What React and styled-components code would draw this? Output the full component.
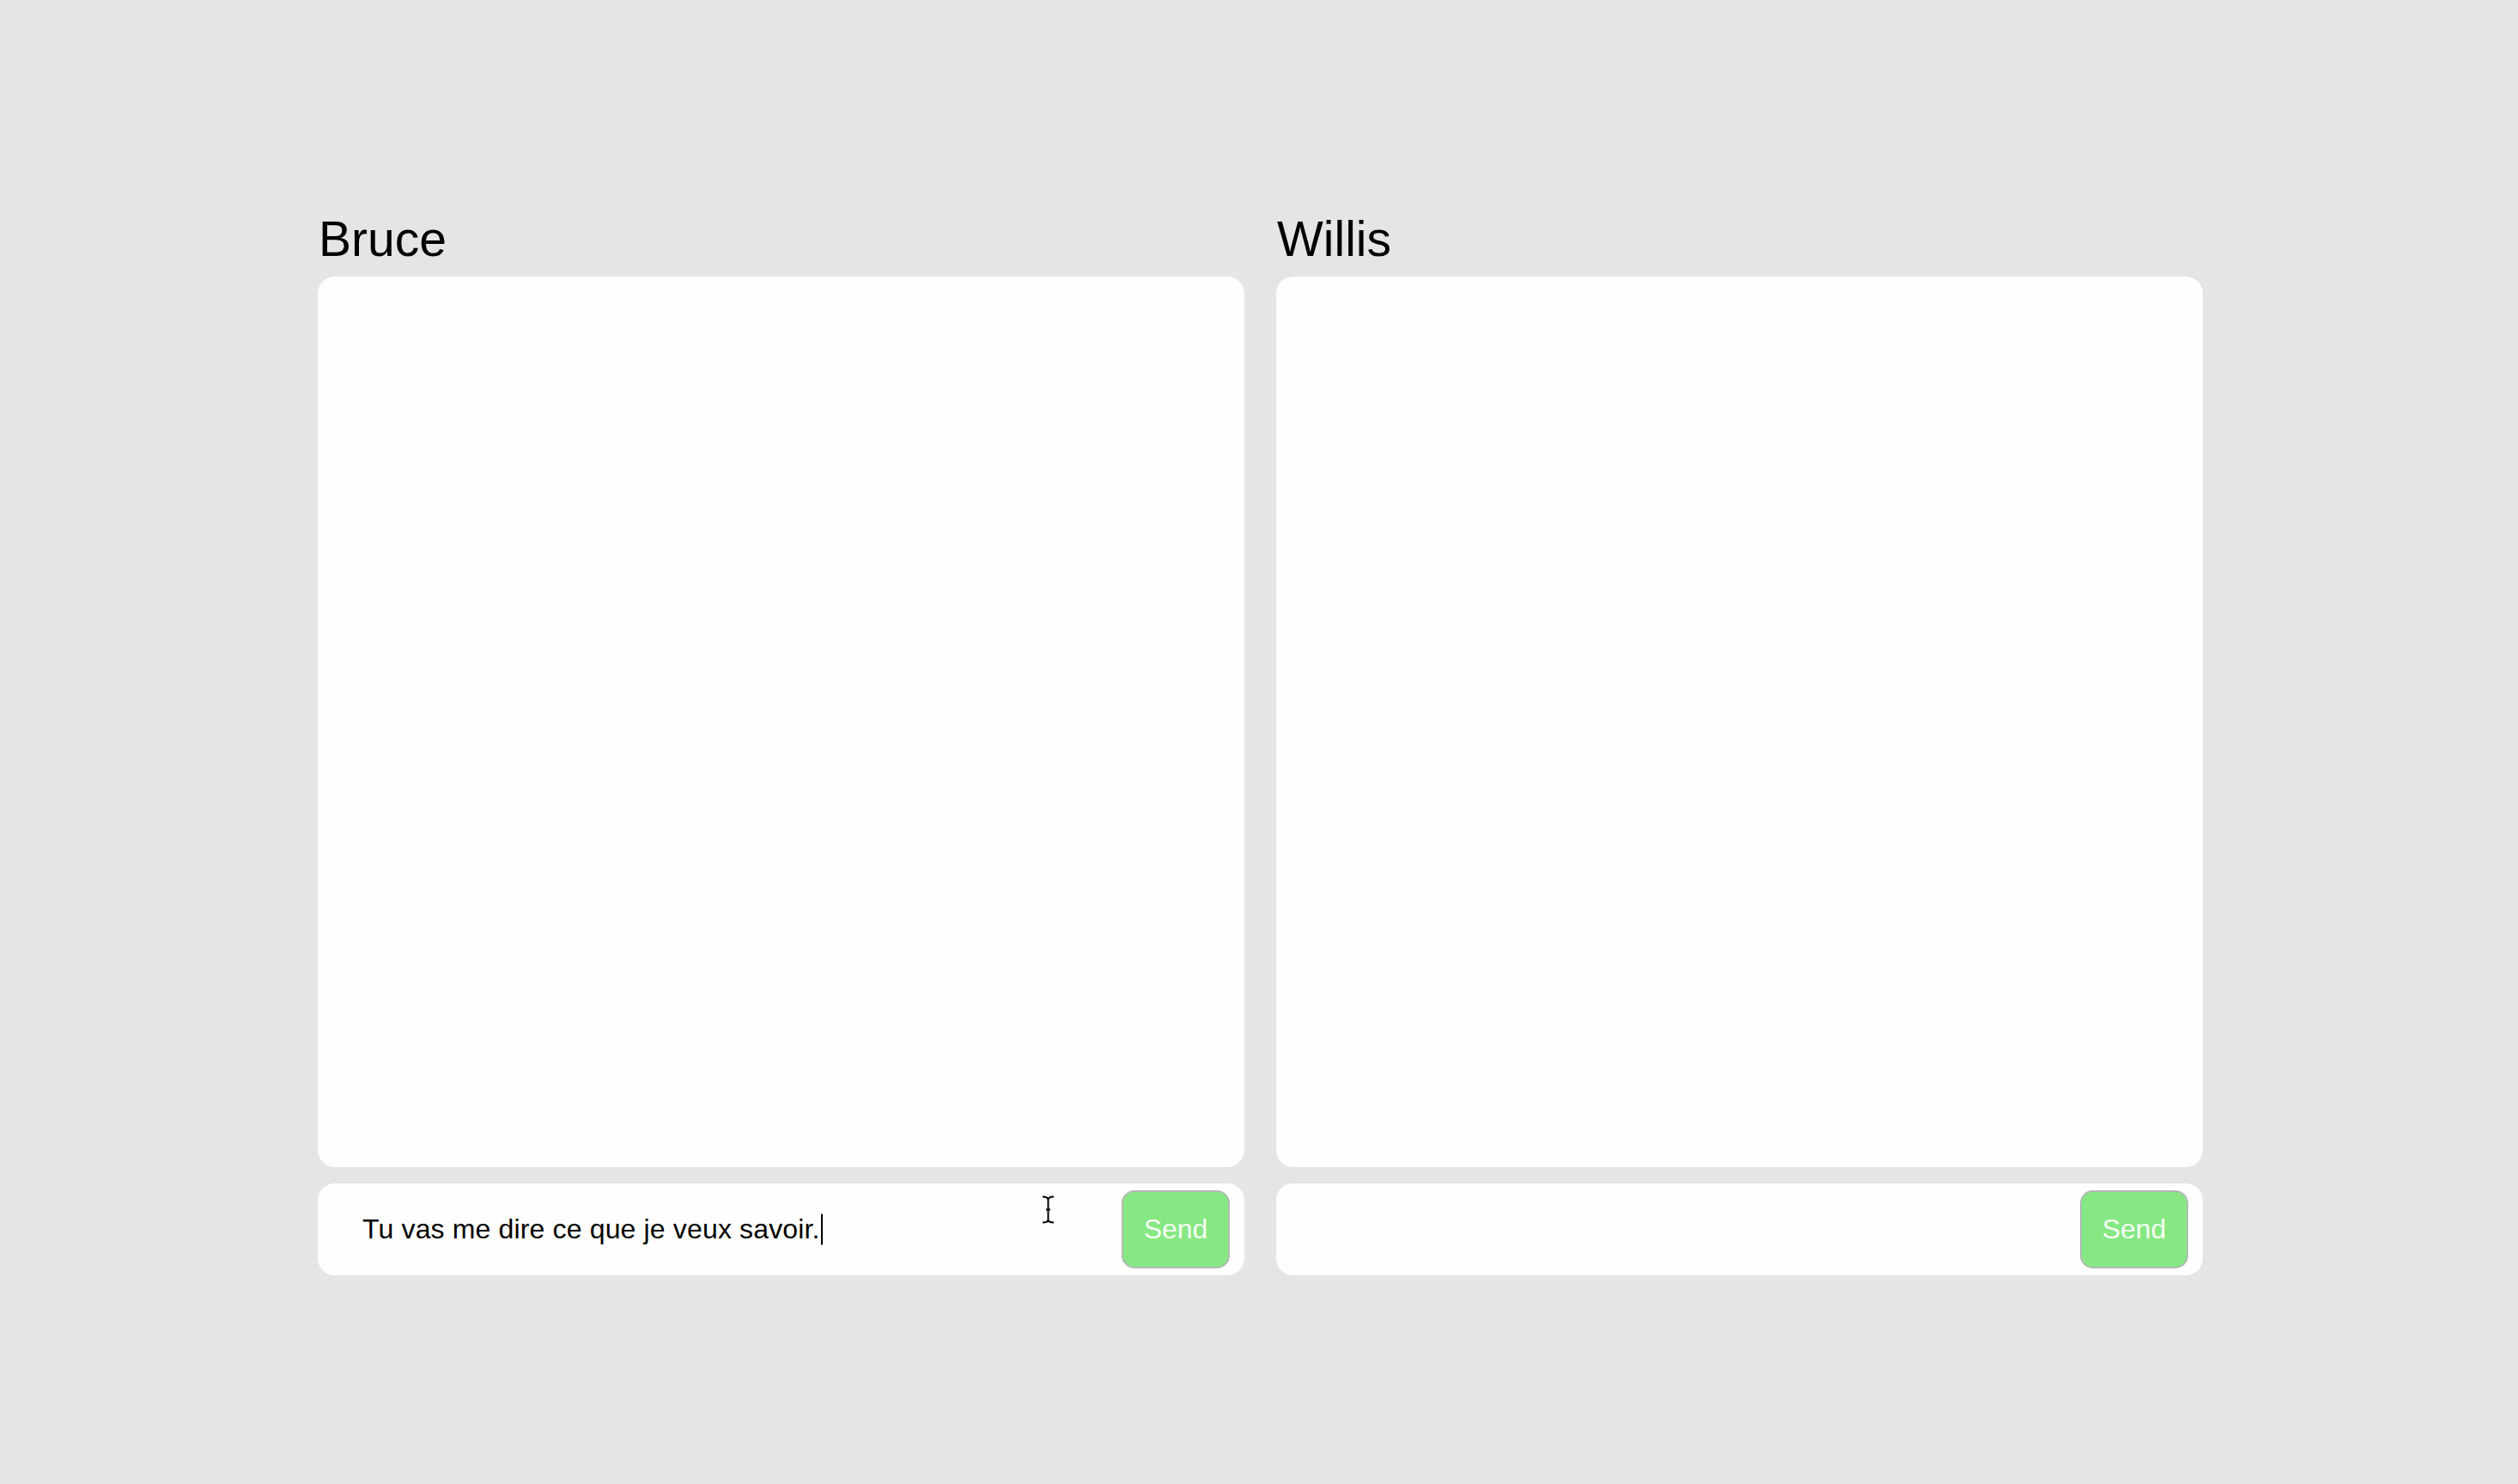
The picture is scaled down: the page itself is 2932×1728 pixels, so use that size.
import { useState } from "react";
import styled, { createGlobalStyle } from "styled-components";

const GlobalStyle = createGlobalStyle`
  html, body {
    margin: 0;
    padding: 0;
    background: #e5e5e7;
    font-family: "Liberation Sans", Arial, Helvetica, sans-serif;
  }
`;

function IBeam() {
  return (
    <svg width="15" height="33" viewBox="0 0 15 33" fill="none">
      <path
        d="M1 1.5 Q7.5 1.5 7.5 5 Q7.5 1.5 14 1.5 M7.5 5 V28 M1 31.5 Q7.5 31.5 7.5 28 Q7.5 31.5 14 31.5 M5 16.5 H10"
        stroke="#fff"
        strokeWidth="4"
        strokeLinecap="round"
      />
      <path
        d="M1 1.5 Q7.5 1.5 7.5 5 Q7.5 1.5 14 1.5 M7.5 5 V28 M1 31.5 Q7.5 31.5 7.5 28 Q7.5 31.5 14 31.5 M5 16.5 H10"
        stroke="#000"
        strokeWidth="2"
      />
    </svg>
  );
}

function ChatColumn({ name, initial, showPointer }) {
  const [text, setText] = useState(initial || "");

  return (
    <Column>
      <Name>{name}</Name>
      <Messages />
      <Composer>
        <FieldWrap>
          <Field value={text} onChange={(e) => setText(e.target.value)} />
          {initial && <Mirror>{text}</Mirror>}
        </FieldWrap>
        <SendButton type="button">Send</SendButton>
        {showPointer && (
          <Pointer>
            <IBeam />
          </Pointer>
        )}
      </Composer>
    </Column>
  );
}

export default function App() {
  return (
    <Page>
      <GlobalStyle />
      <Board>
        <ChatColumn name="Bruce" initial="Tu vas me dire ce que je veux savoir." showPointer />
        <ChatColumn name="Willis" />
      </Board>
    </Page>
  );
}

const Page = styled.div`
  min-height: 100vh;
  display: flex;
  align-items: center;
  justify-content: center;
`;

const Board = styled.div`
  display: grid;
  grid-template-columns: 1079px 1079px;
  column-gap: 37px;
  margin: 6px 0 0 3px;
`;

const Column = styled.div`
  display: flex;
  flex-direction: column;
`;

const Name = styled.h2`
  margin: 0 0 15px 1px;
  font-size: 57px;
  font-weight: 400;
  line-height: 1;
  color: #000;
`;

const Messages = styled.div`
  height: 1037px;
  background: #fefefc;
  border-radius: 20px;
`;

const Composer = styled.div`
  position: relative;
  margin-top: 19px;
  height: 107px;
  box-sizing: border-box;
  display: flex;
  align-items: center;
  gap: 16px;
  padding: 0 17px 0 52px;
  background: #fefefc;
  border-radius: 20px;
`;

const FieldWrap = styled.div`
  position: relative;
  flex: 1;
  min-width: 0;
  display: flex;
  align-items: center;
`;

const textStyle = `
  font-family: "Liberation Sans", Arial, Helvetica, sans-serif;
  font-size: 32px;
  letter-spacing: 0.15px;
`;

const Field = styled.input`
  flex: 1;
  min-width: 0;
  border: none;
  outline: none;
  background: transparent;
  padding: 0;
  ${textStyle}
  color: #000;
  caret-color: #000;
`;

const Mirror = styled.span`
  position: absolute;
  left: 0;
  top: 50%;
  transform: translateY(-50%);
  ${textStyle}
  white-space: pre;
  color: transparent;
  pointer-events: none;

  &::after {
    content: "";
    display: inline-block;
    width: 2px;
    height: 36px;
    margin-left: 1px;
    vertical-align: -8px;
    background: #000;
  }
`;

const SendButton = styled.button`
  width: 126px;
  height: 91px;
  flex-shrink: 0;
  border: 2px solid #b3bab4;
  border-radius: 15px;
  background: #86e882;
  color: #f6fff5;
  font-family: "Liberation Sans", Arial, Helvetica, sans-serif;
  font-size: 32px;
  cursor: pointer;
`;

const Pointer = styled.div`
  position: absolute;
  left: 843px;
  top: 14px;
  pointer-events: none;
  line-height: 0;
`;
